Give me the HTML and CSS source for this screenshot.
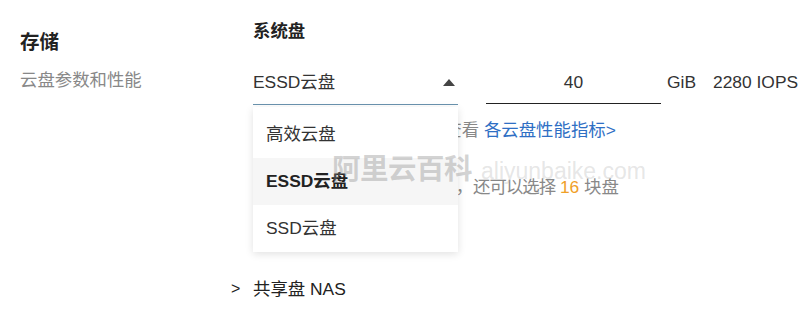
FILE: index.html
```html
<!DOCTYPE html>
<html lang="zh-CN">
<head>
<meta charset="utf-8">
<title>存储</title>
<link rel="stylesheet" href="styles.css">
</head>
<body>
<div class="page">
  <div class="side">
    <div class="side-title">存储</div>
    <div class="side-desc">云盘参数和性能</div>
  </div>
  <div class="main">
    <div class="sec-title">系统盘</div>
    <div class="disk-row">
      <div class="select">
        <span class="select-value">ESSD云盘</span>
        <span class="caret"></span>
      </div>
      <div class="size-input">40</div>
      <span class="unit">GiB</span>
      <span class="iops">2280 IOPS</span>
    </div>
    <div class="hint hint-first">不同云盘的性能不同，请查看 <a class="link">各云盘性能指标&gt;</a></div>
    <div class="hint hint-second"><span class="lead">您当前已选择一块系统云盘</span>，<span class="tight">还可以选择</span> <span class="num">16</span> 块盘</div>
    <div class="nas-row"><span class="chev">&gt;</span><span>共享盘 NAS</span></div>

    <div class="dropdown">
      <div class="opt">高效云盘</div>
      <div class="opt opt-active">ESSD云盘</div>
      <div class="opt">SSD云盘</div>
    </div>
  </div>
  <div class="watermark"><span class="wm-cn">阿里云百科</span><span class="wm-en">aliyunbaike.com</span></div>
</div>
</body>
</html>
```
FILE: styles.css
```css
* { box-sizing: border-box; }
html, body { margin: 0; padding: 0; background: #fff; }
body {
  font-family: "Liberation Sans", "Noto Sans CJK SC", sans-serif;
  font-size: 17.4px;
  color: #333;
  width: 800px;
  height: 317px;
  overflow: hidden;
}
.page {
  position: relative;
  display: flex;
  height: 317px;
}
.side {
  width: 253px;
  padding-left: 20px;
  padding-top: 30px;
}
.side-title {
  font-size: 19.5px;
  font-weight: 700;
  line-height: 24px;
  color: #222;
}
.side-desc {
  margin-top: 14px;
  line-height: 24px;
  color: #888;
}
.main {
  position: relative;
  flex: 1;
  padding-top: 19px;
}
.sec-title {
  font-weight: 600;
  line-height: 24px;
  color: #222;
}
.disk-row {
  display: flex;
  align-items: flex-start;
  margin-top: 27px;
  line-height: 24px;
}
.select {
  width: 205px;
  display: flex;
  align-items: center;
  justify-content: space-between;
  padding-bottom: 10px;
  border-bottom: 1.5px solid #6a93ae;
}
.caret {
  width: 0;
  height: 0;
  margin-right: 3px;
  border-left: 6px solid transparent;
  border-right: 6px solid transparent;
  border-bottom: 7px solid #444;
}
.size-input {
  width: 175px;
  margin-left: 28px;
  text-align: center;
  padding-bottom: 9px;
  border-bottom: 1.5px solid #222;
}
.unit { margin-left: 6px; }
.iops { margin-left: 17px; }
.hint {
  line-height: 24px;
  color: #888;
  white-space: nowrap;
}
.hint-first { margin-top: 13px; }
.hint-second { margin-top: 33px; }
.lead { letter-spacing: -0.5px; }
.tight { letter-spacing: -1px; }
.link { color: #2f6fc4; text-decoration: none; }
.num { color: #f0a028; }
.nas-row {
  margin-top: 78px;
  margin-left: -22px;
  line-height: 24px;
  color: #222;
  display: flex;
}
.chev {
  width: 22px;
  font-size: 16px;
}
.dropdown {
  position: absolute;
  left: 0;
  top: 107px;
  width: 205px;
  padding-top: 4px;
  background: #fff;
  box-shadow: 0 2px 8px rgba(0, 0, 0, 0.12);
}
.opt {
  height: 47px;
  line-height: 47px;
  padding-left: 13px;
  color: #333;
}
.opt-active {
  background: #f6f6f6;
  font-weight: 700;
  color: #222;
}
.watermark {
  position: absolute;
  left: 332px;
  top: 153px;
  display: flex;
  align-items: baseline;
  line-height: 32px;
  pointer-events: none;
}
.wm-cn {
  font-size: 28.5px;
  font-weight: 700;
  color: rgba(140, 140, 140, 0.38);
  letter-spacing: -0.5px;
}
.wm-en {
  margin-left: 9px;
  font-size: 23px;
  color: rgba(170, 170, 170, 0.3);
}
```
